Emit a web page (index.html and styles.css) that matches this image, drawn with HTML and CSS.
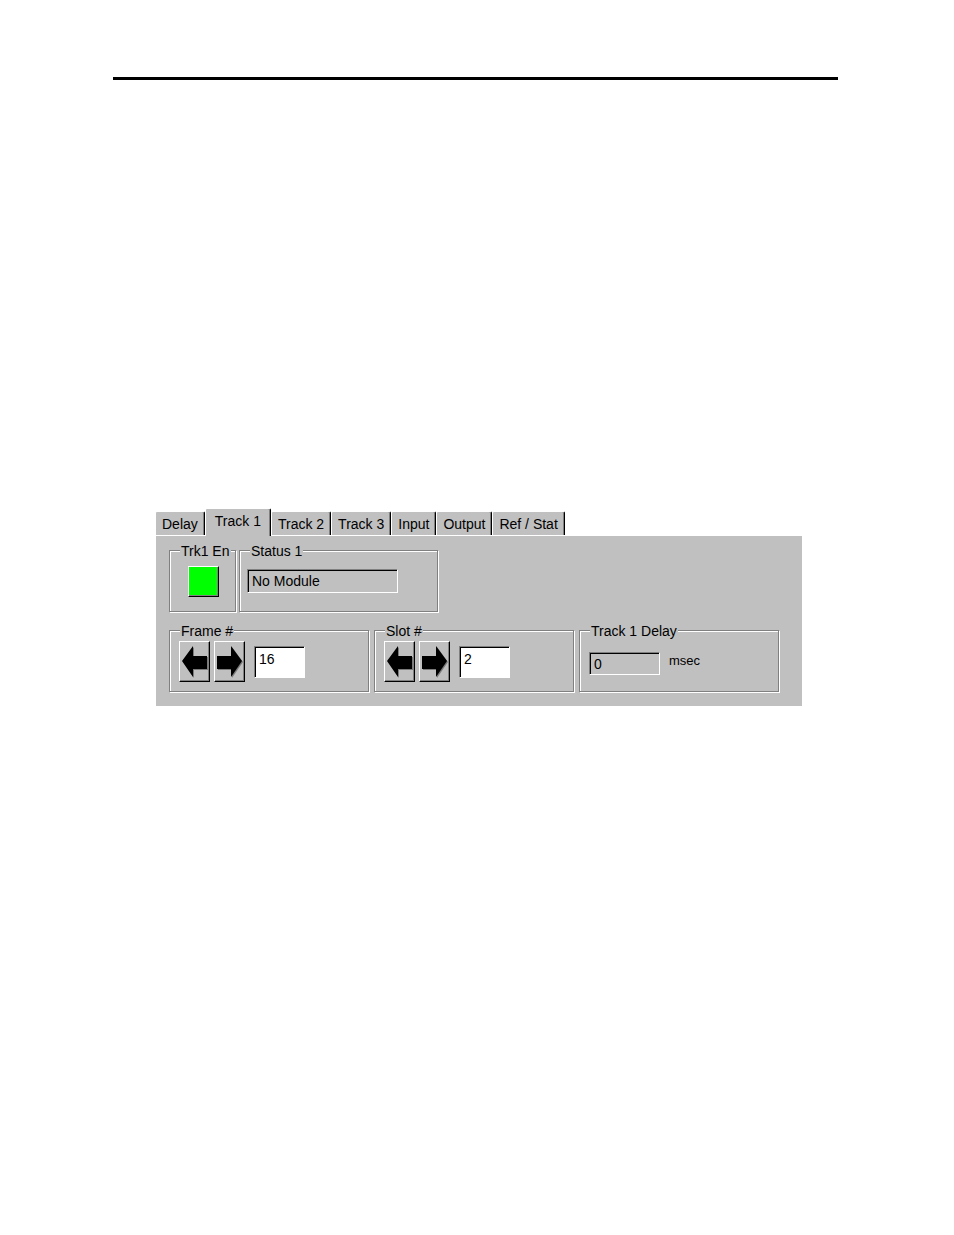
FILE: index.html
```html
<!DOCTYPE html>
<html>
<head>
<meta charset="utf-8">
<link rel="stylesheet" href="styles.css">
</head>
<body>
<div class="rule"></div>
<div class="window">
  <div class="tabs">
    <div class="tab">Delay</div>
    <div class="tab tab-active">Track 1</div>
    <div class="tab">Track 2</div>
    <div class="tab">Track 3</div>
    <div class="tab">Input</div>
    <div class="tab">Output</div>
    <div class="tab">Ref / Stat</div>
  </div>
  <div class="panel">
    <div class="row row-top">
      <div class="group group-en">
        <span class="legend">Trk1 En</span>
        <div class="led"></div>
      </div>
      <div class="group group-status">
        <span class="legend">Status 1</span>
        <div class="field field-status">No Module</div>
      </div>
    </div>
    <div class="row row-bottom">
      <div class="group group-wide">
        <span class="legend">Frame #</span>
        <div class="spin">
          <div class="arrow-btn">
            <svg width="26" height="33" viewBox="0 0 26 33"><polygon points="1,17 12,2 12,12 26,12 26,25 12,25 12,33" fill="#7a7a7a"/><polygon points="0,16 11,1 11,11 25,11 25,24 11,24 11,32" fill="#000"/></svg>
          </div>
          <div class="arrow-btn">
            <svg width="26" height="33" viewBox="0 0 26 33"><polygon points="26,17 15,2 15,12 1,12 1,25 15,25 15,33" fill="#7a7a7a"/><polygon points="25,16 14,1 14,11 0,11 0,24 14,24 14,32" fill="#000"/></svg>
          </div>
          <div class="field field-white">16</div>
        </div>
      </div>
      <div class="group group-wide">
        <span class="legend">Slot #</span>
        <div class="spin">
          <div class="arrow-btn">
            <svg width="26" height="33" viewBox="0 0 26 33"><polygon points="1,17 12,2 12,12 26,12 26,25 12,25 12,33" fill="#7a7a7a"/><polygon points="0,16 11,1 11,11 25,11 25,24 11,24 11,32" fill="#000"/></svg>
          </div>
          <div class="arrow-btn">
            <svg width="26" height="33" viewBox="0 0 26 33"><polygon points="26,17 15,2 15,12 1,12 1,25 15,25 15,33" fill="#7a7a7a"/><polygon points="25,16 14,1 14,11 0,11 0,24 14,24 14,32" fill="#000"/></svg>
          </div>
          <div class="field field-white">2</div>
        </div>
      </div>
      <div class="group group-wide">
        <span class="legend">Track 1 Delay</span>
        <div class="delay">
          <div class="field field-delay">0</div>
          <span class="unit">msec</span>
        </div>
      </div>
    </div>
  </div>
</div>
</body>
</html>
```
FILE: styles.css
```css
html, body {
  margin: 0;
  padding: 0;
  background: #ffffff;
}

body {
  font-family: "Liberation Sans", Arial, sans-serif;
  font-size: 14px;
  color: #000;
}

.rule {
  margin: 77px 0 0 113px;
  width: 725px;
  height: 3px;
  background: #000;
}

.window {
  margin: 428px 0 0 155px;
  width: 647px;
}

.tabs {
  display: flex;
  align-items: flex-end;
  height: 27px;
}

.tab {
  box-sizing: border-box;
  height: 24px;
  padding: 1px 6px 0 6px;
  line-height: 22px;
  background: #c0c0c0;
  border-top: 1px solid #ffffff;
  border-left: 1px solid #ffffff;
  border-right: 1px solid #000000;
  box-shadow: inset -1px 0 0 #808080;
  border-radius: 2px 2px 0 0;
  white-space: nowrap;
}

.tab-active {
  position: relative;
  z-index: 1;
  height: 28px;
  margin-bottom: -1px;
  padding: 1px 9px 0 9px;
}

.panel {
  box-sizing: border-box;
  height: 171px;
  background: #c0c0c0;
  border-top: 1px solid #ffffff;
  border-left: 1px solid #ffffff;
  padding: 14px 0 0 13px;
  display: flex;
  flex-direction: column;
  gap: 18px;
}

.row {
  display: flex;
}

.row-top {
  gap: 3px;
}

.row-bottom {
  gap: 5px;
}

.group {
  position: relative;
  box-sizing: border-box;
  height: 62px;
  border: 1px solid #808080;
  box-shadow: inset 1px 1px 0 #ffffff, 1px 1px 0 #ffffff;
}

.legend {
  position: absolute;
  top: -8px;
  left: 10px;
  padding: 0 1px;
  line-height: 16px;
  background: #c0c0c0;
  white-space: nowrap;
}

.group-en {
  width: 67px;
  display: flex;
  justify-content: center;
  padding: 15px 0 0 2px;
}

.led {
  box-sizing: border-box;
  width: 31px;
  height: 31px;
  background: #00ff00;
  border: 1px solid;
  border-color: #ffffff #000000 #000000 #ffffff;
  box-shadow: inset -1px -1px 0 #808080;
}

.group-status {
  width: 199px;
  padding: 18px 0 0 7px;
}

.field {
  box-sizing: border-box;
  border: 1px solid;
  border-color: #808080 #ffffff #ffffff #808080;
  box-shadow: inset 1px 1px 0 #000000;
  padding: 1px 0 0 4px;
  line-height: 18px;
  white-space: nowrap;
}

.field-status {
  width: 151px;
  height: 24px;
  background: #c0c0c0;
  padding-top: 2px;
}

.group-wide {
  width: 200px;
}

.spin {
  display: flex;
  align-items: flex-start;
  gap: 4px;
  padding: 10px 0 0 9px;
}

.arrow-btn {
  box-sizing: border-box;
  width: 31px;
  height: 41px;
  background: #c0c0c0;
  border: 1px solid;
  border-color: #ffffff #000000 #000000 #ffffff;
  box-shadow: inset -1px -1px 0 #808080;
  display: flex;
  align-items: center;
  justify-content: center;
}

.field-white {
  width: 51px;
  height: 32px;
  margin: 5px 0 0 5px;
  background: #ffffff;
  padding-top: 3px;
}

.delay {
  display: flex;
  align-items: flex-start;
  gap: 9px;
  padding: 21px 0 0 9px;
}

.field-delay {
  width: 71px;
  height: 23px;
  background: #c0c0c0;
  padding-top: 2px;
}

.unit {
  font-size: 13px;
  line-height: 16px;
  margin-top: 1px;
}
```
